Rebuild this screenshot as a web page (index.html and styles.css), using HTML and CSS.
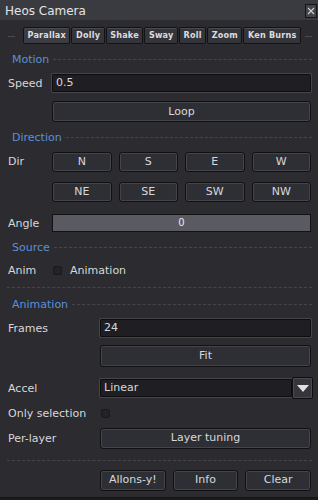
FILE: index.html
```html
<!DOCTYPE html>
<html>
<head lang="en">
    <meta charset="UTF-8">
    <title>Heos Camera</title>
    <link rel="stylesheet" href="styles.css">
</head>
<body>
<div class="window">
    <div class="titlebar">
        <span class="title">Heos Camera</span>
        <span class="close">
            <svg width="8" height="8" viewBox="0 0 8 8"><path d="M1 1L7 7M7 1L1 7" stroke="#cfcfcf" stroke-width="1.2"/></svg>
        </span>
    </div>

    <div class="tabs">
        <span class="grip"></span>
        <span class="tab active">Parallax</span>
        <span class="tab">Dolly</span>
        <span class="tab">Shake</span>
        <span class="tab">Sway</span>
        <span class="tab">Roll</span>
        <span class="tab">Zoom</span>
        <span class="tab">Ken Burns</span>
        <span class="grip"></span>
    </div>

    <div class="heading"><span>Motion</span></div>
    <div class="row narrow">
        <label>Speed</label>
        <div class="input">0.5</div>
    </div>
    <div class="row narrow loop">
        <span></span>
        <div class="btn">Loop</div>
    </div>

    <div class="heading"><span>Direction</span></div>
    <div class="row narrow dirs">
        <label>Dir</label>
        <div class="grid4">
            <div class="btn">N</div>
            <div class="btn">S</div>
            <div class="btn">E</div>
            <div class="btn">W</div>
            <div class="btn">NE</div>
            <div class="btn">SE</div>
            <div class="btn">SW</div>
            <div class="btn">NW</div>
        </div>
    </div>
    <div class="row narrow angle">
        <label>Angle</label>
        <div class="slider">0</div>
    </div>

    <div class="heading"><span>Source</span></div>
    <div class="row narrow anim">
        <label>Anim</label>
        <div class="check"><span class="box"></span>Animation</div>
    </div>
    <div class="sep"></div>

    <div class="heading"><span>Animation</span></div>
    <div class="row wide frames">
        <label>Frames</label>
        <div class="input">24</div>
    </div>
    <div class="row wide fit">
        <span></span>
        <div class="btn">Fit</div>
    </div>
    <div class="row wide accel">
        <label>Accel</label>
        <div class="select">
            <div class="input">Linear</div>
            <div class="drop">
                <svg width="12" height="7" viewBox="0 0 12 7"><path d="M0 0H12L6 7Z" fill="#e0e0e0"/></svg>
            </div>
        </div>
    </div>
    <div class="row wide only">
        <label>Only selection</label>
        <div class="check"><span class="box"></span></div>
    </div>
    <div class="row wide perlayer">
        <label>Per-layer</label>
        <div class="btn">Layer tuning</div>
    </div>
    <div class="sep low"></div>

    <div class="row wide actions">
        <span></span>
        <div class="grid3">
            <div class="btn">Allons-y!</div>
            <div class="btn">Info</div>
            <div class="btn">Clear</div>
        </div>
    </div>
</div>
</body>
</html>
```

FILE: styles.css
```css
* {
    margin: 0;
    padding: 0;
    box-sizing: border-box;
}

body {
    background-color: #1b1b1e;
    font-family: "DejaVu Sans", "Liberation Sans", sans-serif;
    font-size: 11px;
    color: #d8d8da;
}

.window {
    width: 318px;
    height: 498px;
    background-color: #2b2b30;
    border-bottom: 1px solid #141416;
}

.titlebar {
    height: 20px;
    background-color: #3a3b41;
    display: flex;
    align-items: center;
    justify-content: space-between;
    padding: 0 1px 0 5px;
}

.title {
    font-size: 12px;
    color: #e4e4e6;
    padding-top: 2px;
}

.close {
    width: 12px;
    height: 14px;
    border: 1px solid #151517;
    background-color: #44454b;
    display: flex;
    align-items: center;
    justify-content: center;
    margin-top: 2px;
}

.tabs {
    display: flex;
    align-items: flex-start;
    gap: 1px;
    height: 24px;
    padding: 7px 6px 0 8px;
}

.grip {
    flex: none;
    width: 7px;
    height: 17px;
    margin: 0 7px 0 0;
    background: linear-gradient(#2b2b30 9px, #4a4a50 9px, #4a4a50 10px, #2b2b30 10px);
}

.tabs .grip:last-child {
    margin: 0 0 0 3px;
}

.tab {
    flex: 1 1 auto;
    height: 17px;
    padding: 0 3px;
    text-align: center;
    white-space: nowrap;
    font-family: "DejaVu Sans Condensed", "DejaVu Sans", sans-serif;
    font-weight: bold;
    font-size: 9px;
    letter-spacing: 0.2px;
    line-height: 15px;
    color: #dcdcde;
    background-color: #34353b;
    border: 1px solid #131315;
    border-radius: 2px;
    box-shadow: inset 0 1px 0 #4a4b51;
}

.tab.active {
    background-color: #3c3d44;
}

.heading {
    display: flex;
    align-items: center;
    height: 14px;
    margin-top: 8px;
    padding: 0 6px 0 12px;
    color: #5b8fdc;
    font-size: 11px;
}

.heading::after {
    content: "";
    flex: 1;
    margin-left: 4px;
    border-top: 1px dashed #45464c;
}

.sep {
    margin: 9px 6px 0 7px;
    border-top: 1px dashed #45464c;
}

.sep + .heading {
    margin-top: 9px;
}

.row {
    display: grid;
    align-items: center;
    padding: 0 7px 0 8px;
}

.row.narrow {
    grid-template-columns: 44px 1fr;
}

.row.wide {
    grid-template-columns: 92px 1fr;
}

.row label {
    white-space: nowrap;
}

.input {
    height: 18px;
    line-height: 16px;
    padding: 0 3px;
    background-color: #1f1f23;
    border: 1px solid #0d0d0f;
    box-shadow: 0 0 0 1px #45464c;
    border-radius: 1px;
}

.btn {
    height: 20px;
    line-height: 18px;
    text-align: center;
    background-color: #2e2f35;
    border: 1px solid #111113;
    border-radius: 3px;
    box-shadow: inset 0 0 0 1px #44454b;
}

.heading + .row.narrow {
    margin-top: 8px;
}

.loop {
    margin-top: 9px;
}

.loop .btn {
    height: 21px;
    line-height: 19px;
}

.grid4 {
    display: grid;
    grid-template-columns: repeat(4, 1fr);
    column-gap: 7px;
    row-gap: 10px;
}

.dirs {
    align-items: start;
}

.dirs label {
    line-height: 20px;
}

.angle {
    margin-top: 12px;
}

.slider {
    height: 18px;
    line-height: 16px;
    text-align: center;
    background-color: #5a5b62;
    border: 1px solid #121214;
    font-size: 10px;
    color: #e8e8ea;
}

.anim {
    height: 16px;
}

.check {
    display: flex;
    align-items: center;
}

.box {
    width: 9px;
    height: 9px;
    margin: 0 8px 0 1px;
    background-color: #232327;
    border: 1px solid #1a1a1d;
    border-radius: 2px;
}

.frames {
    margin-top: 8px;
}

.fit {
    margin-top: 8px;
}

.fit .btn {
    height: 22px;
    line-height: 20px;
}

.accel {
    margin-top: 10px;
}

.select {
    display: flex;
    align-items: center;
}

.select .input {
    flex: 1;
}

.drop {
    width: 21px;
    height: 22px;
    display: flex;
    align-items: center;
    justify-content: center;
    background-color: #35363c;
    border: 1px solid #0f0f11;
    box-shadow: inset 0 0 0 1px #4a4b51;
    border-radius: 2px;
    margin-right: -2px;
}

.only {
    height: 16px;
    margin-top: 6px;
}

.perlayer {
    margin-top: 7px;
}

.perlayer .btn {
    height: 21px;
}

.low {
    margin-top: 11px;
}

.actions {
    margin-top: 9px;
}

.grid3 {
    display: grid;
    grid-template-columns: repeat(3, 1fr);
    gap: 7px;
}

.grid3 .btn {
    height: 21px;
}
```
